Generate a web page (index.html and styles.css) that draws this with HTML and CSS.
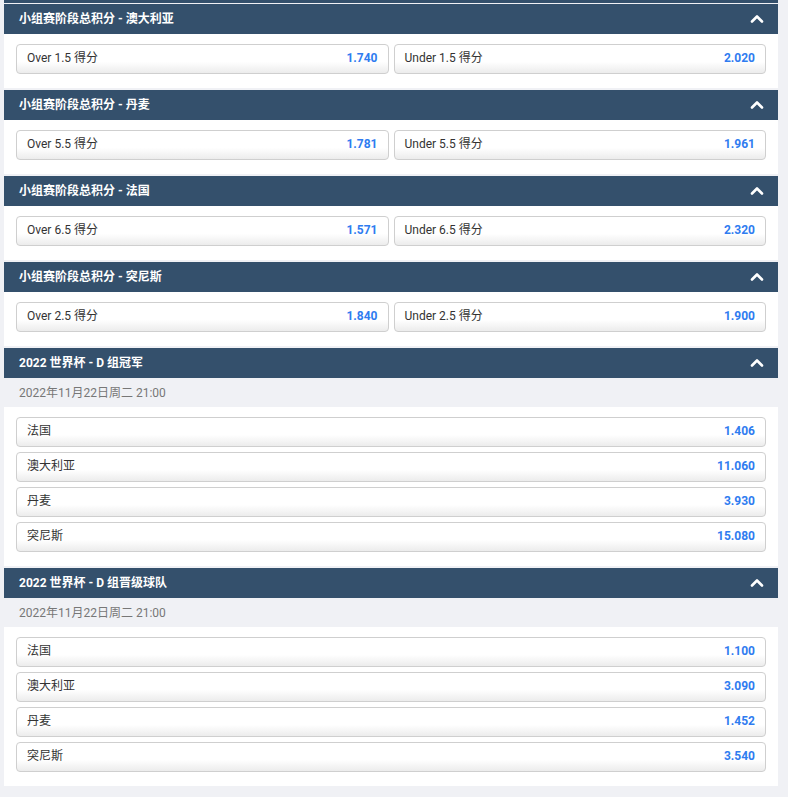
FILE: index.html
```html
<!DOCTYPE html>
<html lang="zh-CN">
<head>
    <meta charset="UTF-8">
    <meta name="viewport" content="width=device-width, initial-scale=1.0">
    <title>小组赛投注</title>
    <link rel="stylesheet" href="styles.css">
</head>
<body>
    <div class="page">
        <!-- 上一个盘口的结尾 -->
        <div class="prev-edge"></div>

        <!-- 总积分 - 澳大利亚 -->
        <section class="market">
            <div class="market-head">
                <span class="market-title">小组赛阶段总积分 - 澳大利亚</span>
                <svg class="chevron" viewBox="0 0 14 9"><path d="M2 7.5 L7 2.5 L12 7.5"/></svg>
            </div>
            <div class="market-body grid-2">
                <a class="odd-btn"><span class="odd-name">Over 1.5 得分</span><span class="odd-price">1.740</span></a>
                <a class="odd-btn"><span class="odd-name">Under 1.5 得分</span><span class="odd-price">2.020</span></a>
            </div>
        </section>

        <!-- 总积分 - 丹麦 -->
        <section class="market">
            <div class="market-head">
                <span class="market-title">小组赛阶段总积分 - 丹麦</span>
                <svg class="chevron" viewBox="0 0 14 9"><path d="M2 7.5 L7 2.5 L12 7.5"/></svg>
            </div>
            <div class="market-body grid-2">
                <a class="odd-btn"><span class="odd-name">Over 5.5 得分</span><span class="odd-price">1.781</span></a>
                <a class="odd-btn"><span class="odd-name">Under 5.5 得分</span><span class="odd-price">1.961</span></a>
            </div>
        </section>

        <!-- 总积分 - 法国 -->
        <section class="market">
            <div class="market-head">
                <span class="market-title">小组赛阶段总积分 - 法国</span>
                <svg class="chevron" viewBox="0 0 14 9"><path d="M2 7.5 L7 2.5 L12 7.5"/></svg>
            </div>
            <div class="market-body grid-2">
                <a class="odd-btn"><span class="odd-name">Over 6.5 得分</span><span class="odd-price">1.571</span></a>
                <a class="odd-btn"><span class="odd-name">Under 6.5 得分</span><span class="odd-price">2.320</span></a>
            </div>
        </section>

        <!-- 总积分 - 突尼斯 -->
        <section class="market">
            <div class="market-head">
                <span class="market-title">小组赛阶段总积分 - 突尼斯</span>
                <svg class="chevron" viewBox="0 0 14 9"><path d="M2 7.5 L7 2.5 L12 7.5"/></svg>
            </div>
            <div class="market-body grid-2">
                <a class="odd-btn"><span class="odd-name">Over 2.5 得分</span><span class="odd-price">1.840</span></a>
                <a class="odd-btn"><span class="odd-name">Under 2.5 得分</span><span class="odd-price">1.900</span></a>
            </div>
        </section>

        <!-- D 组冠军 -->
        <section class="market">
            <div class="market-head">
                <span class="market-title">2022 世界杯 - D 组冠军</span>
                <svg class="chevron" viewBox="0 0 14 9"><path d="M2 7.5 L7 2.5 L12 7.5"/></svg>
            </div>
            <div class="market-date">2022年11月22日周二 21:00</div>
            <div class="market-body list">
                <a class="odd-btn"><span class="odd-name">法国</span><span class="odd-price">1.406</span></a>
                <a class="odd-btn"><span class="odd-name">澳大利亚</span><span class="odd-price">11.060</span></a>
                <a class="odd-btn"><span class="odd-name">丹麦</span><span class="odd-price">3.930</span></a>
                <a class="odd-btn"><span class="odd-name">突尼斯</span><span class="odd-price">15.080</span></a>
            </div>
        </section>

        <!-- D 组晋级球队 -->
        <section class="market">
            <div class="market-head">
                <span class="market-title">2022 世界杯 - D 组晋级球队</span>
                <svg class="chevron" viewBox="0 0 14 9"><path d="M2 7.5 L7 2.5 L12 7.5"/></svg>
            </div>
            <div class="market-date">2022年11月22日周二 21:00</div>
            <div class="market-body list">
                <a class="odd-btn"><span class="odd-name">法国</span><span class="odd-price">1.100</span></a>
                <a class="odd-btn"><span class="odd-name">澳大利亚</span><span class="odd-price">3.090</span></a>
                <a class="odd-btn"><span class="odd-name">丹麦</span><span class="odd-price">1.452</span></a>
                <a class="odd-btn"><span class="odd-name">突尼斯</span><span class="odd-price">3.540</span></a>
            </div>
        </section>
    </div>
</body>
</html>
```

FILE: styles.css
```css
/* 기본 초기화 */
* {
    margin: 0;
    padding: 0;
    box-sizing: border-box;
}

body {
    font-family: Roboto, "Noto Sans CJK SC", sans-serif;
    background-color: #f0f1f5;
    color: #333;
    line-height: 14px;
}

/* 가운데 컬럼 */
.page {
    margin: 0 10px 0 4px;
}

.prev-edge {
    height: 3px;
    background-color: #34506c;
    margin-bottom: 1px;
}

.market {
    margin-bottom: 2px;
}

/* 헤더 바 */
.market-head {
    height: 30px;
    background-color: #34506c;
    display: flex;
    align-items: center;
    justify-content: space-between;
    padding: 0 14px 0 15px;
}

.market-title {
    color: #fff;
    font-size: 12px;
    font-weight: 700;
    padding-bottom: 1px;
}

.chevron {
    width: 14px;
    height: 9px;
    margin-bottom: 1px;
}

.chevron path {
    fill: none;
    stroke: #fff;
    stroke-width: 2.6;
    stroke-linecap: round;
    stroke-linejoin: round;
}

/* 날짜 줄 */
.market-date {
    height: 29px;
    display: flex;
    align-items: center;
    padding-left: 15px;
    font-size: 12px;
    color: #777;
}

/* 본문 */
.market-body {
    background-color: #fff;
    padding: 10px 12px 14px;
}

.grid-2 {
    display: grid;
    grid-template-columns: 1fr 1fr;
    gap: 5px;
}

.list {
    display: flex;
    flex-direction: column;
    gap: 5px;
}

/* 배당 버튼 */
.odd-btn {
    height: 30px;
    display: flex;
    align-items: center;
    justify-content: space-between;
    padding: 0 10px 2px 10px;
    border: 1px solid #cfcfcf;
    border-radius: 4px;
    background: linear-gradient(to bottom, #fff 0%, #fff 60%, #ececec 100%);
    cursor: pointer;
}

.odd-name {
    font-size: 12px;
    color: #333;
}

.odd-price {
    font-size: 12px;
    font-weight: 700;
    color: #2f7cf0;
}
```
